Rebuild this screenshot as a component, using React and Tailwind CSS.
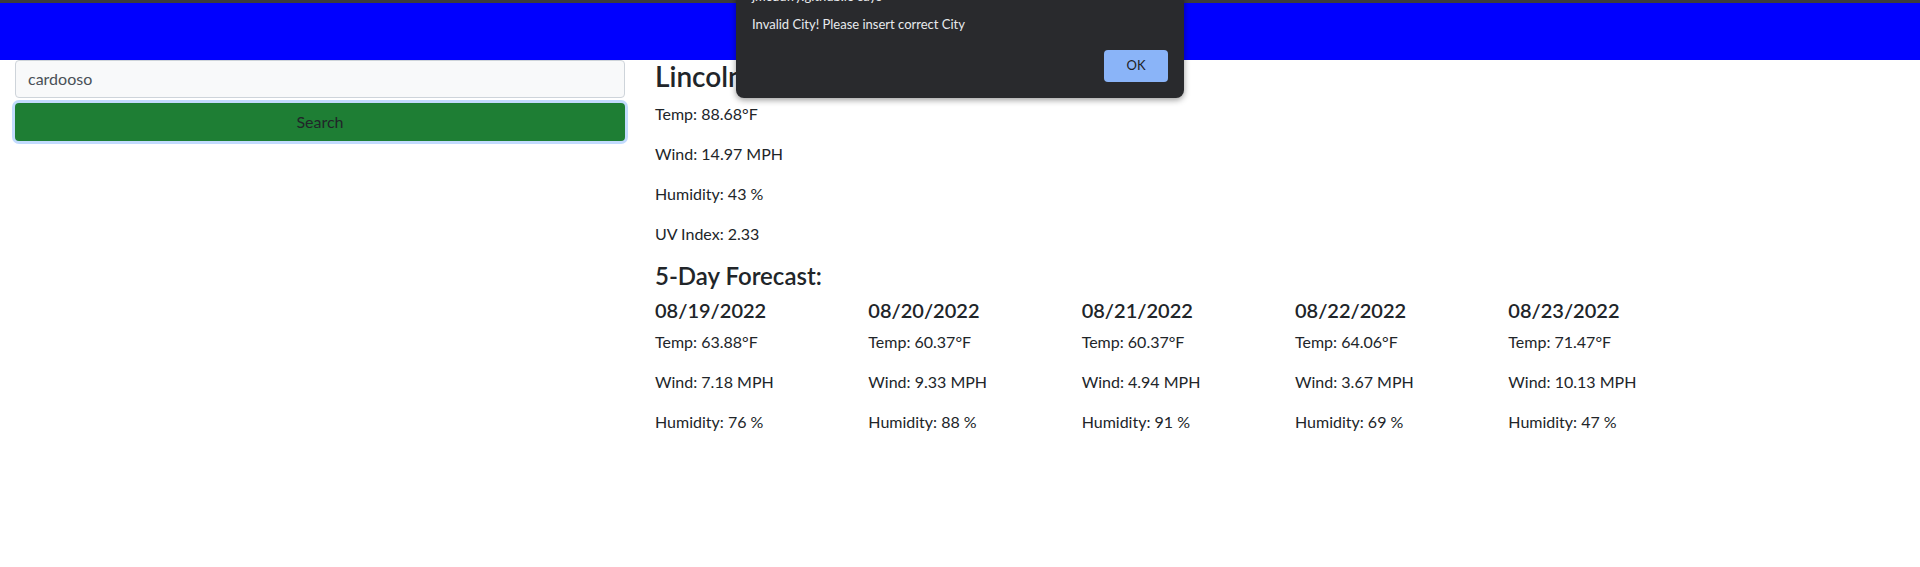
import React from "react";

const FONT = { fontFamily: 'Lato, "Noto Sans", sans-serif' };

const forecast = [
  { date: "08/19/2022", temp: "63.88", wind: "7.18", hum: "76" },
  { date: "08/20/2022", temp: "60.37", wind: "9.33", hum: "88" },
  { date: "08/21/2022", temp: "60.37", wind: "4.94", hum: "91" },
  { date: "08/22/2022", temp: "64.06", wind: "3.67", hum: "69" },
  { date: "08/23/2022", temp: "71.47", wind: "10.13", hum: "47" },
];

export default function App() {
  return (
    <div className="relative w-[1920px] h-[567px] overflow-hidden bg-white text-[#212529]" style={FONT}>
      <div className="h-[3px] bg-[#3c3c3c]" />
      <div className="h-[57px] bg-[#0000ff]" />
      <div className="flex">
        <div className="w-[640px] px-[15px]">
          <div className="h-[38px] rounded-[4px] border border-[#ced4da] bg-[#f8f9fa] pl-[12px] flex items-center text-[16px] text-[#495057]">
            cardooso
          </div>
          <div className="mt-[5px] h-[38px] rounded-[4px] bg-[#1e7e34] shadow-[0_0_0_3px_#c2dbfe] flex items-center justify-center text-[16px] text-[#212529]">
            Search
          </div>
        </div>
        <div className="w-[1280px] px-[15px]">
          <h3 className="text-[28px] font-semibold leading-[1.2] mb-[8px]">Lincoln (08/18/2022)</h3>
          <p className="text-[16px] leading-[24px] mb-[16px]">Temp: 88.68°F</p>
          <p className="text-[16px] leading-[24px] mb-[16px]">Wind: 14.97 MPH</p>
          <p className="text-[16px] leading-[24px] mb-[16px]">Humidity: 43 %</p>
          <p className="text-[16px] leading-[24px] mb-[16px]">UV Index: 2.33</p>
          <h4 className="text-[24px] font-semibold leading-[1.2] mb-[8px]">5-Day Forecast:</h4>
          <div className="-mx-[15px] grid grid-cols-6">
            {forecast.map((d) => (
              <div key={d.date} className="px-[15px]">
                <h5 className="text-[20px] font-semibold leading-[1.2] mb-[8px]">{d.date}</h5>
                <p className="text-[16px] leading-[24px] mb-[16px]">Temp: {d.temp}°F</p>
                <p className="text-[16px] leading-[24px] mb-[16px]">Wind: {d.wind} MPH</p>
                <p className="text-[16px] leading-[24px] mb-[16px]">Humidity: {d.hum} %</p>
              </div>
            ))}
          </div>
        </div>
      </div>

      <div className="absolute left-[736px] top-[-14px] w-[448px] rounded-b-[8px] bg-[#292a2d] px-[16px] pb-[16px] shadow-[0_2px_6px_rgba(0,0,0,0.4)] text-[13px] text-[#e8eaed]">
        <div className="h-[20px] leading-[20px]">jmcduffy.github.io says</div>
        <div className="mt-[8px] h-[20px] leading-[20px]">Invalid City! Please insert correct City</div>
        <div className="mt-[16px] flex justify-end">
          <div className="w-[64px] h-[32px] rounded-[4px] bg-[#8ab4f8] text-[#202124] flex items-center justify-center text-[13px]">
            OK
          </div>
        </div>
      </div>
    </div>
  );
}
